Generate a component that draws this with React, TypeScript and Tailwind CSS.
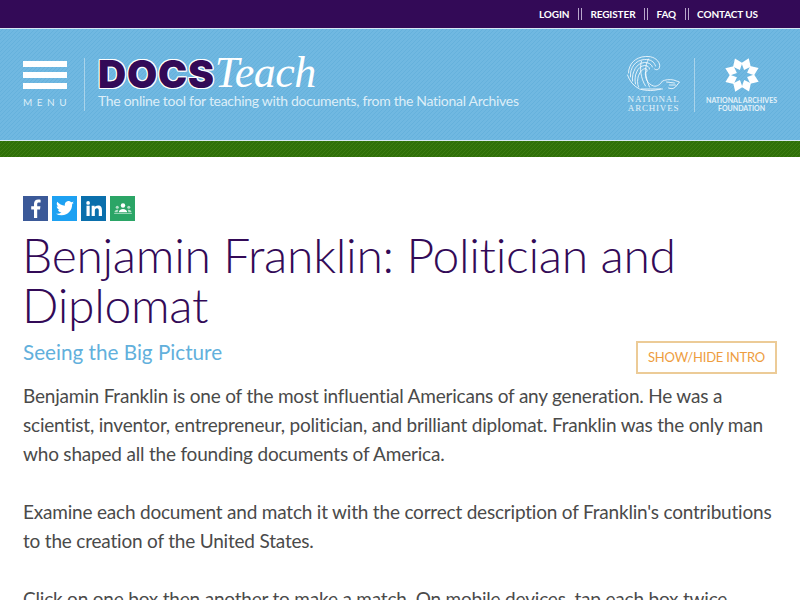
const stripeBlue =
  'bg-[repeating-linear-gradient(135deg,#70b8e1_0px,#70b8e1_2.121px,#65b1dc_2.121px,#65b1dc_2.828px)]';

const WaveLogo = () => (
  <svg width="57" height="36" viewBox="0 0 54 36" fill="none" stroke="white" strokeWidth="0.8" strokeLinecap="round">
    <path d="M2 17C2 8 9 1 19 0.5C26 0 31 3 33 8C34 13 31 15 28 13" />
    <path d="M4 21C3 12 9 4 18 3.500C24 3 28 6 29 10" />
    <path d="M6 25C5 16 10 7 18 6.500C22 6.500 25 8 26 11" />
    <path d="M9 28C7 20 11 10 18 9.500C21 9.500 23 11 23 13" />
    <path d="M12 31C9 24 13 13 19 12.500C21 13 21 15 20 16" />
    <path d="M15 5C13 12 14 22 19 30" />
    <path d="M22 3C18 10 18 20 23 31" />
    <path d="M1 19C3 25 7 30 13 33C20 35 28 35 34 33" />
    <path d="M19 16C18 22 21 28 27 30C31 31 34 28 36 25C38 24 43 23 47 24L53 26L49 31C47 33 44 33 42 32" />
    <path d="M40 26L48 27M43 29L49 29" />
    <path d="M15 33L36 33" />
  </svg>
);

// eight-point star from the foundation mark
const StarLogo = () => (
  <svg width="36" height="36" viewBox="-18 -18 36 36" fill="white">
    {[0, 45, 90, 135, 180, 225, 270, 315].map((a) => (
      <path key={a} transform={`rotate(${a + 22})`} d="M0 -5.500L-5 -11L0 -18L5 -11Z" />
    ))}
  </svg>
);

const TopLink = ({ label, last }: { label: string; last?: boolean }) => (
  <>
    <span>{label}</span>
    {!last && <span className="mx-[8.500px] h-[12px] w-[4px] border-x border-[#b9a8cc]" />}
  </>
);

const SocialIcons = () => (
  <div className="flex gap-[4px]">
    <div className="flex h-[25px] w-[25px] items-center justify-center bg-[#3b5998]">
      <svg width="11" height="19" viewBox="0 0 11 19" fill="white">
        <path d="M7.200 19V10.600H10L10.400 7.300H7.200V5.200C7.200 4.200 7.500 3.600 8.900 3.600H10.600V0.700C10.300 0.600 9.300 0.500 8.200 0.500C5.700 0.500 4 2 4 4.800V7.300H1.200V10.600H4V19Z" />
      </svg>
    </div>
    <div className="flex h-[25px] w-[25px] items-center justify-center bg-[#1da1f2]">
      <svg width="18" height="15" viewBox="0 0 24 20" fill="white">
        <path d="M24 2.400c-.9.4-1.800.7-2.800.8 1-.6 1.800-1.600 2.200-2.700-.9.6-2 1-3.100 1.200A4.900 4.900 0 0 0 11.900 6.200C7.800 6 4.200 4 1.700.9c-.4.8-.7 1.600-.7 2.500 0 1.700.9 3.200 2.200 4.100-.8 0-1.600-.2-2.200-.6v.1c0 2.400 1.700 4.400 3.900 4.800-.4.1-.8.2-1.300.2-.3 0-.6 0-.9-.1.600 2 2.400 3.400 4.600 3.400A9.900 9.900 0 0 1 0 16.900 13.900 13.900 0 0 0 7.500 19c9.100 0 14-7.500 14-14v-.6c1-.7 1.800-1.500 2.500-2z" />
      </svg>
    </div>
    <div className="flex h-[25px] w-[25px] items-center justify-center bg-[#0a6fac]">
      <svg width="16" height="15" viewBox="0 0 17 16" fill="white">
        <rect x="0.500" y="5" width="3.400" height="11" />
        <circle cx="2.200" cy="2" r="2" />
        <path d="M6 5H9.200V6.600C9.800 5.600 11 4.700 12.800 4.700C16 4.700 17 6.700 17 9.800V16H13.600V10.500C13.600 9 13.200 7.800 11.700 7.800C10.100 7.800 9.400 9 9.400 10.500V16H6Z" />
      </svg>
    </div>
    <div className="flex h-[25px] w-[25px] items-center justify-center bg-[#2ba566]">
      <svg width="20" height="11" viewBox="0 0 21 13" fill="white">
        <circle cx="10.500" cy="3" r="2.600" />
        <circle cx="3.700" cy="5" r="1.800" opacity="0.65" />
        <circle cx="17.300" cy="5" r="1.800" opacity="0.65" />
        <path d="M5.500 11C5.500 8.500 8 7 10.500 7C13 7 15.500 8.500 15.500 11Z" />
        <path d="M0.500 11C0.500 9 2 8 3.700 8C4.200 8 4.600 8.100 5 8.200C4.400 9 4.200 10 4.200 11Z" opacity="0.65" />
        <path d="M20.500 11C20.500 9 19 8 17.300 8C16.800 8 16.400 8.100 16 8.200C16.600 9 16.800 10 16.800 11Z" opacity="0.65" />
        <rect x="0" y="11.800" width="21" height="1" opacity="0.6" />
      </svg>
    </div>
  </div>
);

export default function App() {
  return (
    <div className="h-screen overflow-hidden bg-white font-['Lato',sans-serif]">
      <div className="flex h-[28px] items-center justify-end bg-[#330a57] pr-[42px] text-[10px] font-bold tracking-[-0.1px] text-white">
        <TopLink label="LOGIN" />
        <TopLink label="REGISTER" />
        <TopLink label="FAQ" />
        <TopLink label="CONTACT US" last />
      </div>

      <header className={`flex h-[113px] items-center justify-between border-y border-[#d5e8f3] pl-[23px] pr-[23px] ${stripeBlue}`}>
        <div className="flex items-center">
          <div className="flex w-[44px] flex-col">
            <div className="h-[6px] bg-white" />
            <div className="mt-[5px] h-[6px] bg-white" />
            <div className="mt-[5px] h-[6px] bg-white" />
            <div className="mt-[6px] whitespace-nowrap text-[10px] leading-[14px] tracking-[4.500px] text-[#dceef8]">MENU</div>
          </div>
          <div className="ml-[17px] h-[53px] w-px bg-[#a9d3ea]" />
          <div className="ml-[13px] mt-[-4px]">
            <div className="flex h-[36px] items-center leading-none">
              <span className="font-['Inter',sans-serif] text-[39px] font-black tracking-[0.800px] text-[#330a57] [text-shadow:1px_0_0_white,-1px_0_0_white,0_1px_0_white,0_-1px_0_white,1px_1px_0_white,-1px_-1px_0_white,1px_-1px_0_white,-1px_1px_0_white]">
                DOCS
              </span>
              <span className="font-['Liberation_Serif',serif] text-[44px] italic tracking-[-0.500px] text-white">Teach</span>
            </div>
            <div className="mt-[1px] text-[14px] leading-[18px] tracking-[-0.3px] text-[#dceef8]">
              The online tool for teaching with documents, from the National Archives
            </div>
          </div>
        </div>
        <div className="flex items-center">
          <div className="flex flex-col items-center text-[#e3f1f9]">
            <WaveLogo />
            <div className="mt-[3px] font-['Liberation_Serif',serif] text-[9px] leading-[9px] tracking-[0.800px]">NATIONAL</div>
            <div className="font-['Liberation_Serif',serif] text-[9px] leading-[9px] tracking-[0.800px]">ARCHIVES</div>
          </div>
          <div className="ml-[12px] mr-[11px] h-[54px] w-px bg-[#a9d3ea]" />
          <div className="flex flex-col items-center text-[7px] font-bold leading-[8px] text-[#e3f1f9]">
            <StarLogo />
            <div className="mt-[3px]">NATIONAL ARCHIVES</div>
            <div>FOUNDATION</div>
          </div>
        </div>
      </header>

      <div className="h-[16px] bg-[repeating-linear-gradient(135deg,#2f7008_0px,#2f7008_2.121px,#3d7d12_2.121px,#3d7d12_2.828px)]" />

      <main className="px-[23px] pt-[39px]">
        <SocialIcons />
        <h1 className="ml-[-1px] mt-[9px] text-[48px] font-light leading-[50px] tracking-[-0.3px] text-[#330a57]">
          Benjamin Franklin: Politician and Diplomat
        </h1>
        <div className="mt-[3px] flex items-start justify-between">
          <h2 className="mt-[5px] text-[20.700px] leading-[28px] text-[#62b0dc]">Seeing the Big Picture</h2>
          <button className="mt-[8px] h-[33px] w-[141px] whitespace-nowrap border-2 border-[#eccb97] text-[13px] tracking-[-0.2px] text-[#ee9d3e]">
            SHOW/HIDE INTRO
          </button>
        </div>
        <div className="mt-[7px] text-[19px] leading-[29px] tracking-[-0.2px] text-[#4a4a4a]">
          <p>
            Benjamin Franklin is one of the most influential Americans of any generation. He was a scientist, inventor,
            entrepreneur, politician, and brilliant diplomat. Franklin was the only man who shaped all the founding
            documents of America.
          </p>
          <p className="mt-[29px]">
            Examine each document and match it with the correct description of Franklin's contributions to the creation
            of the United States.
          </p>
          <p className="mt-[29px]">
            Click on one box then another to make a match. On mobile devices, tap each box twice
          </p>
        </div>
      </main>
    </div>
  );
}
